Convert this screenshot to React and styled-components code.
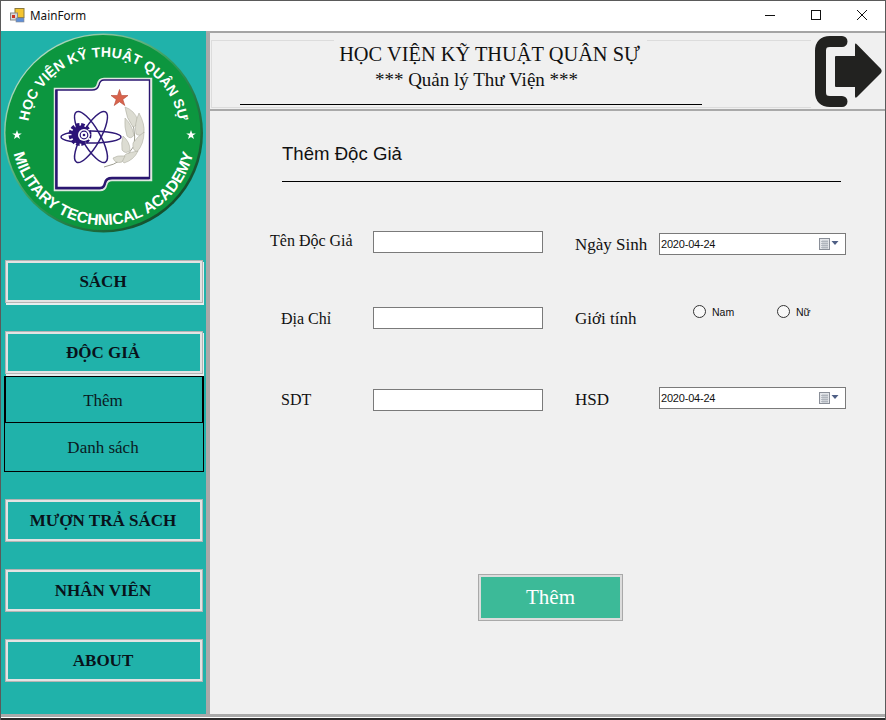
import React from "react";
import styled, { createGlobalStyle } from "styled-components";

const SERIF = `"Liberation Serif", "Noto Serif", serif`;
const SANS = `"Liberation Sans", Arial, sans-serif`;

const GlobalStyle = createGlobalStyle`
  html, body {
    margin: 0;
    padding: 0;
    background: #f0f0f0;
  }
  * {
    box-sizing: border-box;
  }
`;

const AppIcon = () => (
  <svg width="15" height="15" viewBox="0 0 15 15">
    <rect x="5" y="0.5" width="9" height="9" fill="#f4c430" stroke="#8c7a3c" />
    <rect x="0.5" y="5" width="7" height="7" fill="#d9d9d9" stroke="#8a8a8a" />
    <rect x="2" y="7" width="3" height="3" fill="#cc3322" />
    <rect x="6" y="10" width="8" height="4" fill="#5f8fd8" stroke="#8a8a8a" strokeWidth="0.6" />
  </svg>
);

const Logo = () => (
  <LogoSvg viewBox="1 31 205 205">
    <defs>
      <path id="arcTop" d="M 27.5 133 A 76 76 0 0 1 179.5 133" />
      <path id="arcBottom" d="M 11.5 133 A 92 92 0 0 0 195.5 133" />
      <linearGradient id="rim" x1="0" y1="0" x2="1" y2="1">
        <stop offset="0" stopColor="#e6f3ea" />
        <stop offset="0.5" stopColor="#2f9a58" />
        <stop offset="1" stopColor="#07301a" />
      </linearGradient>
    </defs>
    <circle cx="103.5" cy="133" r="99.5" fill="url(#rim)" />
    <circle cx="103" cy="132.5" r="97.5" fill="#0c963f" />
    <text fontFamily={SANS} fontWeight="700" fontSize="14" fill="#fff" letterSpacing="0.1">
      <textPath href="#arcTop" startOffset="50%" textAnchor="middle">
        HỌC VIỆN KỸ THUẬT QUÂN SỰ
      </textPath>
    </text>
    <text fontFamily={SANS} fontWeight="700" fontSize="15.5" fill="#fff" letterSpacing="0">
      <textPath href="#arcBottom" startOffset="50%" textAnchor="middle">
        MILITARY TECHNICAL ACADEMY
      </textPath>
    </text>
    <polygon points="17,130 18.2,133.4 21.8,133.4 18.9,135.6 20,139 17,137 14,139 15.1,135.6 12.2,133.4 15.8,133.4" fill="#fff" />
    <polygon points="191,130 192.2,133.4 195.8,133.4 192.9,135.6 194,139 191,137 188,139 189.1,135.6 186.2,133.4 189.8,133.4" fill="#fff" />

    <path
      d="M55 89 H92 Q97 89 98 84 Q99 79 104 79 H151 V180 H112 Q107 180 106 185 Q105 190 100 190 H55 Z"
      fill="#fff"
      stroke="#dfe8e0"
      strokeWidth="2.5"
    />
    <path
      d="M56 90 H92 Q97.5 90 99 85 Q100 80 104 80 H149.5 V178.5 H112 Q106 178.5 105 183.5 Q104 188.5 100 188.5 H56 Z"
      fill="#fff"
      stroke="#2a1670"
      strokeWidth="1.4"
    />
    <path d="M56.5 90 V188 H100 Q104 188 105 183 Q106 178 112 178 H149" fill="none" stroke="#2a1670" strokeWidth="2.4" />

    <polygon
      points="119.5,89.5 121.5,95.5 128,95.5 122.8,99.4 124.8,105.5 119.5,101.8 114.2,105.5 116.2,99.4 111,95.5 117.5,95.5"
      fill="#d8634c"
      stroke="#b54a38"
      strokeWidth="0.6"
    />

    <g fill="none" stroke="#2f1a78" strokeWidth="1.5">
      <ellipse cx="91" cy="137" rx="30" ry="6" />
      <ellipse cx="91" cy="137" rx="29" ry="9" transform="rotate(60 91 137)" />
      <ellipse cx="91" cy="137" rx="29" ry="9" transform="rotate(-60 91 137)" />
    </g>
    <circle cx="80" cy="134.5" r="9" fill="none" stroke="#2c1377" strokeWidth="5" strokeDasharray="3.2 1.6" />
    <circle cx="80.5" cy="134.5" r="9" fill="#2c1377" />
    <circle cx="84" cy="135" r="6" fill="#fff" />
    <circle cx="84" cy="135" r="3.8" fill="none" stroke="#2c1377" strokeWidth="1.2" />
    <circle cx="84" cy="135" r="1.3" fill="#2c1377" />

    <g fill="#dcdcd2" stroke="#a4a496" strokeWidth="0.5">
      <path d="M104 167 Q124 163 134 146 Q137 128 127 110" fill="none" stroke="#9d9d90" strokeWidth="1" />
      <path d="M125 107 Q134 110 138 120 Q137 126 133 127 Q126 118 125 107 Z" />
      <path d="M139 113 Q145 124 144 133 Q140 137 136 134 Q134 124 139 113 Z" />
      <path d="M125 118 Q132 125 134 135 Q131 140 127 136 Q124 127 125 118 Z" />
      <path d="M144 132 Q144 144 137 152 Q132 150 133 143 Q137 137 144 132 Z" />
      <path d="M123 136 Q130 142 130 150 Q126 155 122 150 Q121 143 123 136 Z" />
      <path d="M138 151 Q134 160 124 163 Q120 160 126 154 Q131 152 138 151 Z" />
      <path d="M125 156 Q117 155 113 158 Q115 164 122 162 Z" />
    </g>
  </LogoSvg>
);

const ExitIcon = () => (
  <ExitSvg viewBox="815 36 68 72">
    <path
      d="M842 41.5 H830 Q820.5 41.5 820.5 51 V92 Q820.5 101.5 830 101.5 H842"
      fill="none"
      stroke="#222220"
      strokeWidth="11"
      strokeLinecap="round"
    />
    <path
      d="M836 56 H855 V45 Q855 42.5 857 44.5 L881 69 Q882.5 71 881 73 L857 97 Q855 99 855 96 V87 H836 Q835 87 835 86 V57 Q835 56 836 56 Z"
      fill="#222220"
    />
  </ExitSvg>
);

const CalendarIcon = () => (
  <svg width="20" height="12" viewBox="0 0 20 12">
    <rect x="0.5" y="0.5" width="10" height="11" fill="#e4e6ea" stroke="#8a8f98" />
    <path d="M2 3.5H9M2 5.5H9M2 7.5H9M2 9.5H9M4 2V11M6 2V11M8 2V11" stroke="#a4a9b2" strokeWidth="0.7" />
    <polygon points="12.5,3 19.5,3 16,7" fill="#4e5f85" />
  </svg>
);

const DatePicker = ({ $offset }) => (
  <DateBox $offset={$offset}>
    <span>2020-04-24</span>
    <CalendarIcon />
  </DateBox>
);

const App = () => {
  return (
    <Window>
      <GlobalStyle />
      <TitleBar>
        <TitleLeft>
          <AppIcon />
          <span>MainForm</span>
        </TitleLeft>
        <WinControls>
          <svg width="12" height="12" viewBox="0 0 12 12">
            <path d="M1 6.5H11" stroke="#111" />
          </svg>
          <svg width="12" height="12" viewBox="0 0 12 12">
            <rect x="1.5" y="1.5" width="9" height="9" fill="none" stroke="#111" />
          </svg>
          <svg width="12" height="12" viewBox="0 0 12 12">
            <path d="M1 1L11 11M11 1L1 11" stroke="#111" />
          </svg>
        </WinControls>
      </TitleBar>

      <Body>
        <Sidebar>
          <Logo />
          <NavButton $top={25} $under>SÁCH</NavButton>
          <NavButton $top={30} $under>ĐỘC GIẢ</NavButton>
          <SubMenu>
            <SubItem>Thêm</SubItem>
            <SubItem $last>Danh sách</SubItem>
          </SubMenu>
          <NavButton $top={28}>MƯỢN TRẢ SÁCH</NavButton>
          <NavButton $top={29}>NHÂN VIÊN</NavButton>
          <NavButton $top={29}>ABOUT</NavButton>
        </Sidebar>

        <Main>
          <Header>
            <HeaderBox>
              <TitleBlock>
                <SchoolName>HỌC VIỆN KỸ THUẬT QUÂN SỰ</SchoolName>
                <AppName>*** Quản lý Thư Viện ***</AppName>
              </TitleBlock>
              <HeaderRule />
            </HeaderBox>
            <ExitIcon />
          </Header>

          <Content>
            <PageTitle>Thêm Độc Giả</PageTitle>
            <PageRule />
            <FormGrid>
              <FieldLabel $indent={0} $top={0}>Tên Độc Giả</FieldLabel>
              <TextBox />
              <FieldLabel $col={4} $top={4} $size={17}>Ngày Sinh</FieldLabel>
              <DatePicker $offset={2} />

              <FieldLabel $indent={11} $top={2}>Địa Chỉ</FieldLabel>
              <TextBox />
              <FieldLabel $col={4} $top={2} $size={17}>Giới tính</FieldLabel>
              <RadioGroup>
                <RadioOption $width={84}>
                  <RadioInput type="radio" name="gender" />
                  Nam
                </RadioOption>
                <RadioOption>
                  <RadioInput type="radio" name="gender" />
                  Nữ
                </RadioOption>
              </RadioGroup>

              <FieldLabel $indent={11} $top={1}>SDT</FieldLabel>
              <TextBox />
              <FieldLabel $col={4} $top={1} $size={17}>HSD</FieldLabel>
              <DatePicker $offset={-2} />
            </FormGrid>
            <SubmitButton>Thêm</SubmitButton>
          </Content>
        </Main>
      </Body>
      <BottomEdge />
    </Window>
  );
};

export default App;

/* ---------- Window ---------- */

const Window = styled.div`
  width: 886px;
  height: 720px;
  display: flex;
  flex-direction: column;
  overflow: hidden;
  border: 1px solid #5a5a5a;
  border-bottom: none;
  background: #f0f0f0;
`;

const TitleBar = styled.div`
  height: 30px;
  flex: none;
  display: flex;
  align-items: center;
  justify-content: space-between;
  padding-bottom: 2px;
  background: #fff;
`;

const TitleLeft = styled.div`
  display: flex;
  align-items: center;
  gap: 5px;
  padding-left: 9px;
  font-family: "Noto Sans", sans-serif;
  font-size: 11.7px;
  color: #111;
`;

const WinControls = styled.div`
  display: flex;
  gap: 34px;
  padding-right: 17px;
`;

const Body = styled.div`
  flex: 1;
  display: flex;
  min-height: 0;
`;

const BottomEdge = styled.div`
  height: 6px;
  flex: none;
  border-top: 3px solid #a9a9a9;
  border-bottom: 2px solid #2a2a2a;
  background: #fff;
`;

/* ---------- Sidebar ---------- */

const Sidebar = styled.aside`
  width: 209px;
  flex: none;
  display: flex;
  flex-direction: column;
  align-items: flex-start;
  background: #20b2aa;
  border-right: 4px solid #a9a9a9;
`;

const LogoSvg = styled.svg`
  width: 205px;
  height: 205px;
  flex: none;
  display: block;
`;

const NavButton = styled.div`
  width: 196px;
  height: 41px;
  flex: none;
  margin: ${(p) => p.$top}px 0 0 5px;
  padding-right: 2px;
  display: flex;
  align-items: center;
  justify-content: center;
  border: 2px solid #e3e3e3;
  box-shadow: 0 0 0 1px #b4b4b4 ${(p) => (p.$under ? ", 1px 2px 0 1px #e6eeee" : "")};
  font-family: ${SERIF};
  font-size: 17px;
  font-weight: 700;
  color: #08121a;
`;

const SubMenu = styled.div`
  width: 200px;
  margin: 3px 0 0 3px;
  display: flex;
  flex-direction: column;
`;

const SubItem = styled.div`
  height: ${(p) => (p.$last ? 49 : 47)}px;
  display: flex;
  align-items: center;
  justify-content: center;
  padding-top: 2px;
  padding-right: 2px;
  border: 1px solid #000;
  border-top: ${(p) => (p.$last ? "none" : "1px solid #000")};
  border-left-width: ${(p) => (p.$last ? 1 : 2)}px;
  border-right-width: ${(p) => (p.$last ? 1 : 2)}px;
  font-family: ${SERIF};
  font-size: 17px;
  color: #0a1a22;
`;

/* ---------- Header ---------- */

const Main = styled.main`
  flex: 1;
  min-width: 0;
  display: flex;
  flex-direction: column;
`;

const Header = styled.header`
  height: 80px;
  flex: none;
  display: flex;
  align-items: flex-start;
  padding: 7px 3px 0 1px;
  border-top: 2px solid #a4a4a4;
  border-bottom: 2px solid #a9a9a9;
`;

const HeaderBox = styled.div`
  width: 600px;
  height: 68px;
  flex: none;
  margin-right: 4px;
  display: flex;
  flex-direction: column;
  border: 1px solid #dcdcdc;
  border-right: none;
`;

const TitleBlock = styled.div`
  width: 313px;
  height: 55px;
  margin: -1px 0 0 122px;
  flex: none;
  background: #f0f0f0;
  text-align: center;
  font-family: ${SERIF};
  color: #111;
`;

const SchoolName = styled.div`
  font-size: 20.4px;
  line-height: 24px;
  padding: 2px 2px 0 0;
`;

const AppName = styled.div`
  font-size: 19px;
  line-height: 24px;
  padding: 2px 28px 0 0;
`;

const HeaderRule = styled.div`
  width: 462px;
  height: 1px;
  margin: 9px 0 0 28px;
  background: #000;
`;

const ExitSvg = styled.svg`
  width: 68px;
  height: 72px;
  flex: none;
  margin-top: -4px;
`;

/* ---------- Form ---------- */

const Content = styled.section`
  flex: 1;
  display: flex;
  flex-direction: column;
  align-items: flex-start;
  padding-top: 31px;
`;

const PageTitle = styled.h1`
  margin: 0 0 0 72px;
  font-family: ${SANS};
  font-size: 18.6px;
  font-weight: 400;
  line-height: 24px;
  color: #111;
`;

const PageRule = styled.div`
  width: 559px;
  height: 1px;
  margin: 15px 0 0 72px;
  background: #000;
`;

const FormGrid = styled.div`
  margin: 49px 0 0 60px;
  display: grid;
  grid-template-columns: 103px 170px 32px 84px 187px;
  grid-template-rows: 76px 82px 30px;
`;

const FieldLabel = styled.label`
  grid-column: ${(p) => p.$col || 1};
  padding-left: ${(p) => p.$indent || 0}px;
  margin-top: ${(p) => p.$top}px;
  font-family: ${SERIF};
  font-size: ${(p) => p.$size || 16}px;
  line-height: 20px;
  color: #111;
  white-space: nowrap;
`;

const TextBox = styled.input`
  grid-column: 2;
  width: 170px;
  height: 22px;
  padding: 0 3px;
  border: 1px solid #7a7a7a;
  background: #fff;
  outline: none;
`;

const DateBox = styled.div`
  grid-column: 5;
  width: 187px;
  height: 22px;
  margin-top: ${(p) => p.$offset}px;
  display: flex;
  align-items: center;
  justify-content: space-between;
  padding: 0 6px 0 1px;
  border: 1px solid #7a7a7a;
  background: #fff;
  font-family: ${SANS};
  font-size: 11px;
  letter-spacing: -0.2px;
  color: #111;
`;

const RadioGroup = styled.div`
  grid-column: 5;
  margin-top: -2px;
  padding-left: 34px;
  display: flex;
  align-items: flex-start;
`;

const RadioOption = styled.label`
  width: ${(p) => (p.$width ? `${p.$width}px` : "auto")};
  display: flex;
  align-items: center;
  gap: 6px;
  font-family: ${SANS};
  font-size: 10.5px;
  color: #111;
`;

const RadioInput = styled.input`
  appearance: none;
  width: 13px;
  height: 13px;
  margin: 0;
  border: 1px solid #333;
  border-radius: 50%;
  background: #f8f8f8;
`;

const SubmitButton = styled.button`
  width: 143px;
  height: 45px;
  margin: 156px 0 0 269px;
  padding: 0;
  border: 2px solid #dcdcdc;
  outline: 1px solid #a9a9a9;
  outline-offset: 0;
  background: #3cba98;
  box-shadow: none;
  font-family: ${SERIF};
  font-size: 21px;
  color: #fff;
`;
